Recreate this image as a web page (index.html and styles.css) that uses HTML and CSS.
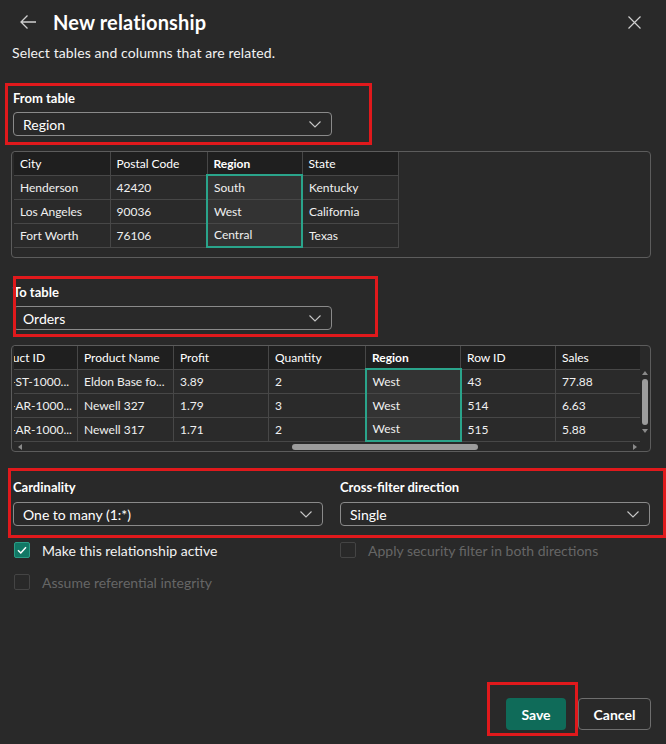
FILE: index.html
```html
<!DOCTYPE html>
<html lang="en">
<head>
<meta charset="utf-8">
<title>New relationship</title>
<link rel="stylesheet" href="styles.css">
</head>
<body>
<div class="dialog">
  <header class="head">
    <svg class="back" width="18" height="18" viewBox="0 0 18 18"><path d="M8.5 2.5 L2 9 L8.5 15.5 M2 9 H17" fill="none" stroke="#cfcfcf" stroke-width="1.3"/></svg>
    <h1 class="title">New relationship</h1>
    <svg class="close" width="13" height="13" viewBox="0 0 13 13"><path d="M0.5 0.5 L12.5 12.5 M12.5 0.5 L0.5 12.5" fill="none" stroke="#cfcfcf" stroke-width="1.2"/></svg>
  </header>
  <p class="sub">Select tables and columns that are related.</p>

  <div class="mark mark-from">
    <div class="lbl">From table</div>
    <div class="select sel-table"><span>Region</span><svg class="chev" width="12" height="7" viewBox="0 0 12 7"><path d="M0.5 0.5 L6 6 L11.5 0.5" fill="none" stroke="#c8c8c8" stroke-width="1.1"/></svg></div>
  </div>

  <div class="gridbox g1">
    <table class="tbl">
      <colgroup><col class="c96"><col class="c97"><col class="c95"><col class="c96"></colgroup>
      <thead><tr><th>City</th><th>Postal Code</th><th class="bold">Region</th><th>State</th></tr></thead>
      <tbody>
        <tr><td>Henderson</td><td>42420</td><td class="hl hl-top">South</td><td>Kentucky</td></tr>
        <tr><td>Los Angeles</td><td>90036</td><td class="hl">West</td><td>California</td></tr>
        <tr><td>Fort Worth</td><td>76106</td><td class="hl hl-bot">Central</td><td>Texas</td></tr>
      </tbody>
    </table>
    <div class="spacer"></div>
  </div>

  <div class="mark mark-to">
    <div class="lbl">To table</div>
    <div class="select sel-table"><span>Orders</span><svg class="chev" width="12" height="7" viewBox="0 0 12 7"><path d="M0.5 0.5 L6 6 L11.5 0.5" fill="none" stroke="#c8c8c8" stroke-width="1.1"/></svg></div>
  </div>

  <div class="gridbox g2">
    <div class="scrollrow">
      <div class="clip">
        <table class="tbl shifted">
          <colgroup><col class="c96"><col class="c96"><col class="c95"><col class="c97"><col class="c95"><col class="c95"><col class="c96"></colgroup>
          <thead><tr><th>Product ID</th><th>Product Name</th><th>Profit</th><th>Quantity</th><th class="bold">Region</th><th>Row ID</th><th>Sales</th></tr></thead>
          <tbody>
            <tr><td>OFF-ST-1000...</td><td>Eldon Base fo...</td><td>3.89</td><td>2</td><td class="hl hl-top">West</td><td>43</td><td>77.88</td></tr>
            <tr><td>OFF-AR-1000...</td><td>Newell 327</td><td>1.79</td><td>3</td><td class="hl">West</td><td>514</td><td>6.63</td></tr>
            <tr><td>OFF-AR-1000...</td><td>Newell 317</td><td>1.71</td><td>2</td><td class="hl hl-bot">West</td><td>515</td><td>5.88</td></tr>
          </tbody>
        </table>
      </div>
      <div class="vbar">
        <svg class="arr" width="6" height="4" viewBox="0 0 6 4"><path d="M0 4 L3 0 L6 4 Z" fill="#8a8a8a"/></svg>
        <div class="vthumb"></div>
        <svg class="arr" width="6" height="4" viewBox="0 0 6 4"><path d="M0 0 L3 4 L6 0 Z" fill="#8a8a8a"/></svg>
      </div>
    </div>
    <div class="hbar">
      <svg class="arr" width="4" height="6" viewBox="0 0 4 6"><path d="M4 0 L0 3 L4 6 Z" fill="#8a8a8a"/></svg>
      <div class="htrack"><div class="hthumb"></div></div>
      <svg class="arr" width="4" height="6" viewBox="0 0 4 6"><path d="M0 0 L4 3 L0 6 Z" fill="#8a8a8a"/></svg>
    </div>
  </div>

  <div class="mark mark-card">
    <div class="fcol">
      <div class="lbl">Cardinality</div>
      <div class="select sel-half"><span>One to many (1:*)</span><svg class="chev" width="12" height="7" viewBox="0 0 12 7"><path d="M0.5 0.5 L6 6 L11.5 0.5" fill="none" stroke="#c8c8c8" stroke-width="1.1"/></svg></div>
    </div>
    <div class="fcol">
      <div class="lbl">Cross-filter direction</div>
      <div class="select sel-half"><span>Single</span><svg class="chev" width="12" height="7" viewBox="0 0 12 7"><path d="M0.5 0.5 L6 6 L11.5 0.5" fill="none" stroke="#c8c8c8" stroke-width="1.1"/></svg></div>
    </div>
  </div>

  <div class="checks">
    <div class="ccol ccol-left">
      <div class="check">
        <span class="box on"><svg width="16" height="16" viewBox="0 0 16 16"><path d="M4 8.3 L6.8 11 L12 5.2" fill="none" stroke="#ffffff" stroke-width="1.5"/></svg></span>
        <span class="ctext">Make this relationship active</span>
      </div>
      <div class="check dis">
        <span class="box"></span>
        <span class="ctext">Assume referential integrity</span>
      </div>
    </div>
    <div class="ccol ccol-right">
      <div class="check dis">
        <span class="box"></span>
        <span class="ctext">Apply security filter in both directions</span>
      </div>
    </div>
  </div>

  <footer class="foot">
    <div class="savemark"><button class="btn primary">Save</button></div>
    <button class="btn secondary">Cancel</button>
  </footer>
</div>
</body>
</html>
```

FILE: styles.css
```css
* { box-sizing: border-box; }
html, body { margin: 0; padding: 0; }
body {
  background: #292929;
  color: #ffffff;
  font-family: "Lato", "Liberation Sans", sans-serif;
  width: 666px;
  height: 744px;
  overflow: hidden;
}
.dialog {
  height: 744px;
  display: flex;
  flex-direction: column;
}
.head {
  height: 44px;
  display: flex;
  align-items: center;
  padding-left: 19px;
  padding-right: 25px;
}
.back { flex: none; }
.title {
  margin: 0 0 0 16px;
  font-size: 20px;
  font-weight: 700;
  line-height: 26px;
  flex: 1;
  letter-spacing: 0.15px;
}
.close { flex: none; }
.sub {
  margin: 0;
  padding-left: 12px;
  font-size: 14px;
  line-height: 18px;
  color: #f2f2f2;
  letter-spacing: 0.1px;
}
.mark {
  outline: 3px solid #e0191c;
  outline-offset: -3px;
}
.lbl {
  font-size: 13px;
  font-weight: 700;
  line-height: 18px;
}
.select {
  height: 24px;
  border: 1px solid #8a8a8a;
  border-radius: 4px;
  display: flex;
  align-items: center;
  justify-content: space-between;
  padding: 0 10px 0 9px;
  font-size: 14px;
  color: #ffffff;
  margin-top: 5px;
}
.chev { flex: none; }
.sel-table { width: 319px; }
.sel-half { width: 310px; margin-top: 6px; }
.mark-from {
  margin: 21px 0 0 5px;
  width: 367px;
  height: 62px;
  padding: 6px 0 0 8px;
}
.mark-to {
  margin: 18px 0 0 13px;
  width: 365px;
  height: 61px;
  padding: 7px 0 0 0;
}
.gridbox {
  margin-left: 11px;
  width: 640px;
  border: 1px solid #5c5c5c;
  border-radius: 4px;
  padding: 0 0 0 2px;
}
.g1 { margin-top: 6px; }
.g2 { margin-top: 8px; padding-left: 2px; }
.spacer { height: 9px; }
.tbl {
  border-collapse: collapse;
  table-layout: fixed;
  font-size: 12px;
  color: #f0f0f0;
}
.c95 { width: 95px; }
.c96 { width: 96px; }
.c97 { width: 97px; }
.tbl th, .tbl td {
  border: 1px solid #474747;
  padding: 0 6px;
  text-align: left;
  white-space: nowrap;
  overflow: hidden;
  font-weight: 400;
}
.tbl th {
  height: 23px;
  background: #1f1f1f;
  color: #ffffff;
  border-top: none;
}
.tbl th.bold { font-weight: 700; }
.tbl td { height: 24px; background: #2a2a2a; }
.tbl td.hl {
  background: #333333;
  border-left: 2px solid #2aa48b;
  border-right: 2px solid #2aa48b;
}
.tbl td.hl-top { border-top: 2px solid #2aa48b; }
.tbl td.hl-bot { border-bottom: 2px solid #2aa48b; }
.g1 .tbl { width: 384px; }
.g1 .tbl tr > :first-child { border-left: none; }
.scrollrow { display: flex; }
.clip {
  width: 626px;
  overflow: hidden;
}
.shifted { width: 670px; margin-left: -33px; }
.vbar {
  width: 10px;
  display: flex;
  flex-direction: column;
  align-items: center;
  padding-top: 25px;
}
.vthumb {
  width: 6px;
  height: 46px;
  border-radius: 3px;
  background: #9c9c9c;
  margin: 4px 0 4px;
}
.hbar {
  height: 9px;
  width: 626px;
  display: flex;
  align-items: center;
  padding: 0 3px 0 4px;
}
.htrack { flex: 1; height: 6px; padding-left: 270px; }
.hthumb {
  width: 186px;
  height: 6px;
  border-radius: 3px;
  background: #9c9c9c;
}
.mark-card {
  margin: 16px 0 0 8px;
  width: 658px;
  height: 70px;
  padding: 10px 0 0 5px;
  display: flex;
  gap: 17px;
}
.fcol { display: flex; flex-direction: column; }
.checks {
  display: flex;
  margin-top: 4px;
  padding-left: 14px;
}
.ccol { display: flex; flex-direction: column; gap: 16px; }
.ccol-left { width: 326px; }
.check {
  display: flex;
  align-items: center;
  height: 16px;
  font-size: 14px;
}
.box {
  width: 16px;
  height: 16px;
  border: 1px solid #474747;
  border-radius: 2px;
  flex: none;
  margin-right: 12px;
  display: block;
}
.box svg { display: block; }
.box.on {
  background: #117865;
  border-color: #2a9d86;
}
.box.on svg { margin: -1px; }
.ctext { color: #f2f2f2; }
.dis .ctext { color: #666666; }
.dis .box { border-color: #444444; }
.foot {
  margin-top: auto;
  display: flex;
  justify-content: flex-end;
  align-items: flex-end;
  padding: 0 15px 8px 0;
}
.savemark {
  border: 3px solid #e0191c;
  padding: 13px 9px 3px 16px;
}
.btn {
  font-family: "Lato", "Liberation Sans", sans-serif;
  font-size: 14px;
  font-weight: 700;
  height: 32px;
  border-radius: 4px;
  display: block;
}
.primary {
  width: 60px;
  background: #0f6b59;
  color: #ffffff;
  border: none;
}
.secondary {
  width: 73px;
  background: #292929;
  color: #ffffff;
  border: 1px solid #6e6e6e;
  margin-bottom: 6px;
}
```
